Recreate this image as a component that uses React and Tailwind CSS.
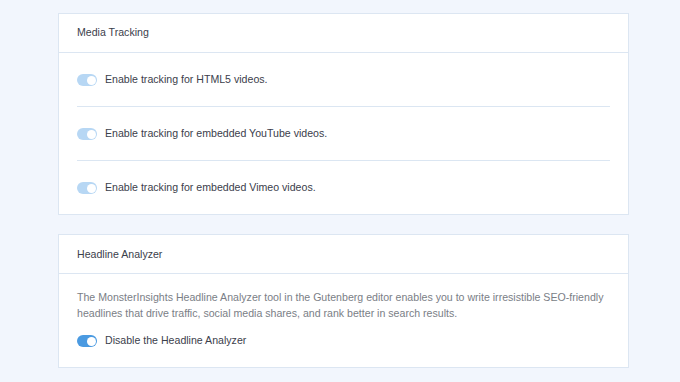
import React from "react";

function Toggle({ on }) {
  return (
    <span
      className={`relative inline-flex h-[12px] w-[20px] shrink-0 items-center rounded-full ${
        on ? "bg-[#4a9ae1]" : "bg-[#b7d7f4]"
      }`}
    >
      <span className="absolute right-[1.5px] h-[9px] w-[9px] rounded-full bg-white" />
    </span>
  );
}

function Row({ label, on, last }) {
  return (
    <div
      className={`flex items-center gap-[8px] pt-[1px] ${
        last ? "h-[53px]" : "h-[54px] border-b border-[#dbe6f2]"
      }`}
    >
      <Toggle on={on} />
      <span className="text-[10.6px] text-[#3b404b]">{label}</span>
    </div>
  );
}

export default function App() {
  return (
    <div
      className="min-h-[382px] w-full bg-[#f2f6fd] pl-[58px] pt-[13px]"
      style={{ fontFamily: '"Liberation Sans", Arial, sans-serif' }}
    >
      <div className="w-[571px]">
        <div className="border border-[#dce6f2] bg-white">
          <div className="flex h-[39px] items-center border-b border-[#dce6f2] px-[18px] text-[10.6px] text-[#3b404b]">
            Media Tracking
          </div>
          <div className="px-[18px]">
            <Row label="Enable tracking for HTML5 videos." />
            <Row label="Enable tracking for embedded YouTube videos." />
            <Row label="Enable tracking for embedded Vimeo videos." last />
          </div>
        </div>

        <div className="mt-[19px] border border-[#dce6f2] bg-white">
          <div className="flex h-[39px] items-center border-b border-[#dce6f2] px-[18px] pt-[1px] text-[10.6px] text-[#3b404b]">
            Headline Analyzer
          </div>
          <div className="px-[18px] pb-[16px] pt-[15px]">
            <p className="text-[10.6px] leading-[16px] text-[#7a7e86]">
              The MonsterInsights Headline Analyzer tool in the Gutenberg editor enables you to write irresistible SEO-friendly headlines that drive traffic, social media shares, and rank better in search results.
            </p>
            <div className="mt-[10px] flex h-[20px] items-center gap-[8px]">
              <Toggle on />
              <span className="text-[10.6px] text-[#3b404b]">Disable the Headline Analyzer</span>
            </div>
          </div>
        </div>
      </div>
    </div>
  );
}
